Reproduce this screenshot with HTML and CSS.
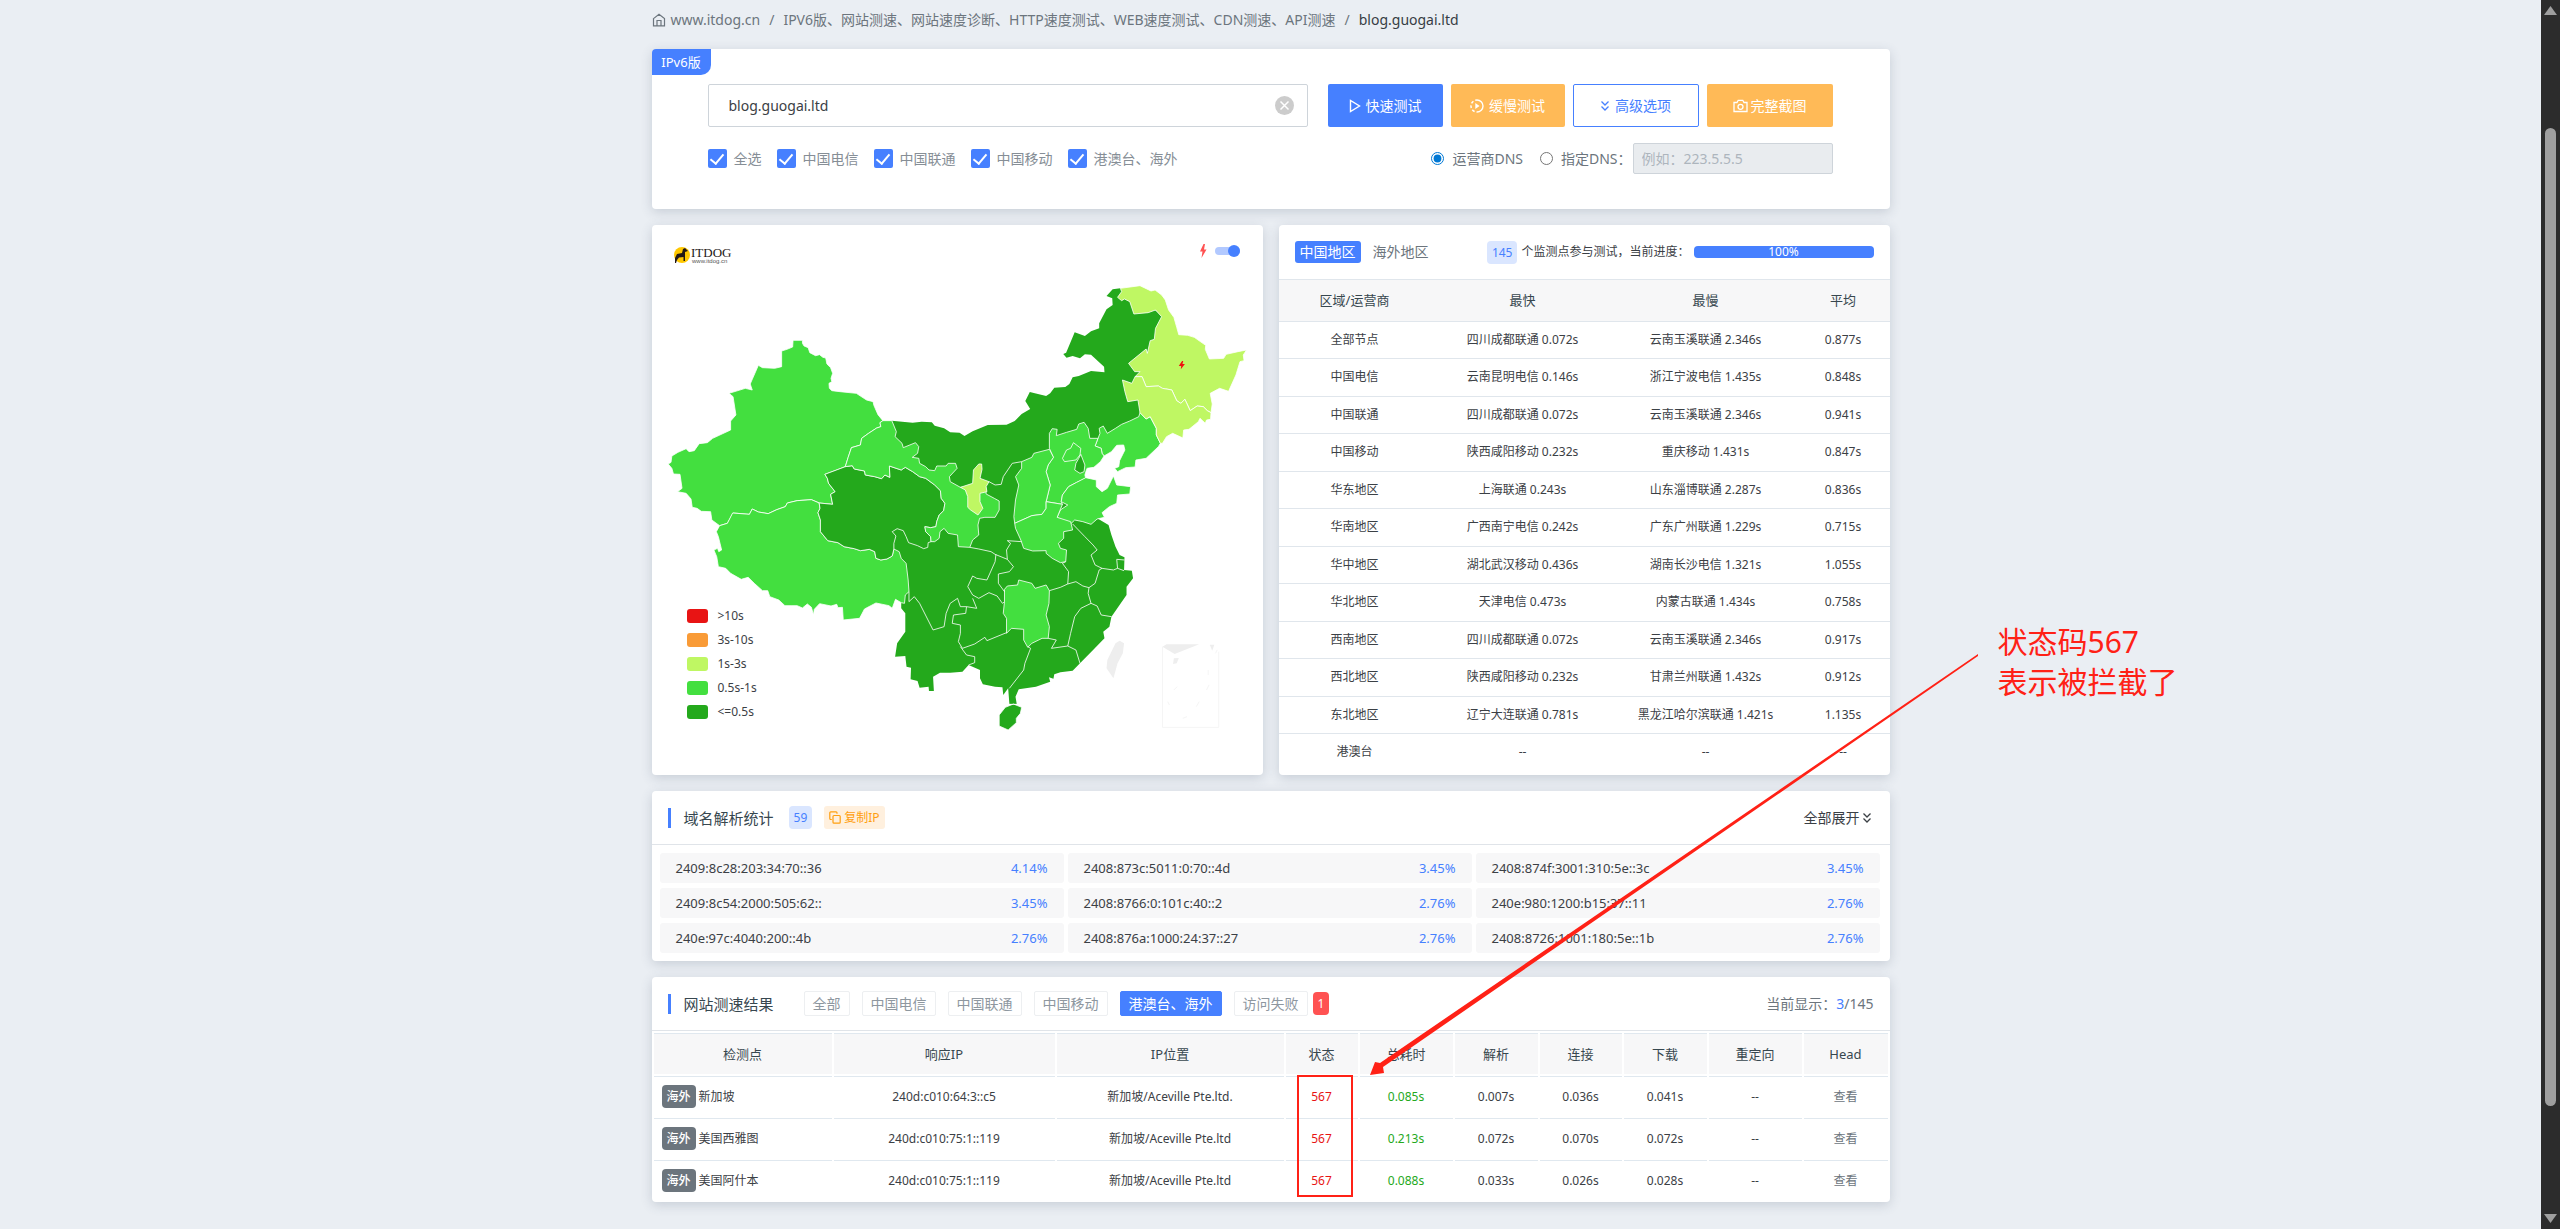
FILE: index.html
```html
<!DOCTYPE html>
<html lang="zh-CN">
<head>
<meta charset="utf-8">
<meta name="viewport" content="width=device-width, initial-scale=1">
<title>blog.guogai.ltd - 网站测速</title>
<link rel="stylesheet" href="styles.css">
</head>
<body>
<svg class="defs" aria-hidden="true">
  <symbol id="i-down2" viewBox="0 0 10 12"><path d="M1.5 1.5 5 5l3.5-3.5M1.5 6.5 5 10l3.5-3.5" fill="none" stroke="currentColor" stroke-width="1.3"/></symbol>
</svg>
<main class="page">
  <nav class="crumbs" aria-label="breadcrumb">
    <a href="#"><svg width="14" height="14" viewBox="0 0 14 14" fill="none" stroke="currentColor" stroke-width="1.2"><path d="M1.500 5.600 7 1.200l5.500 4.400V12.800H1.500zM5 12.800V7.500h4v5.300"/></svg>www.itdog.cn</a>
    <span>/</span>
    <a href="#">IPV6版、网站测速、网站速度诊断、HTTP速度测试、WEB速度测试、CDN测速、API测速</a>
    <span>/</span>
    <span class="current">blog.guogai.ltd</span>
  </nav>

  <section class="card search">
    <span class="version">IPv6版</span>
    <form class="search-form">
      <div class="row">
        <div class="host">
          <input type="text" aria-label="网址" value="blog.guogai.ltd">
          <button type="button" class="clear" aria-label="清除"><svg width="19" height="19" viewBox="0 0 19 19"><circle cx="9.500" cy="9.500" r="9.500" fill="#ccc"/><path d="m5.500 5.500 8 8m0-8-8 8" stroke="#fff" stroke-width="1.500"/></svg></button>
        </div>
        <div class="actions">
          <button type="button" class="btn blue"><svg width="12" height="14" viewBox="0 0 12 14"><path d="M1.500 1.500v11L10.500 7z" fill="none" stroke="currentColor" stroke-width="1.400"/></svg>快速测试</button>
          <button type="button" class="btn orange narrow"><svg width="14" height="14" viewBox="0 0 14 14"><circle cx="7" cy="7" r="6" fill="none" stroke="currentColor" stroke-width="1.400" stroke-dasharray="18.850 2 2.700 2 2.700 2 2.700 2 2.750" transform="rotate(-90 7 7)"/><path d="M5.300 4v6l4.200-3z" fill="currentColor"/></svg>缓慢测试</button>
          <button type="button" class="btn outline"><svg width="10" height="12"><use href="#i-down2"/></svg>高级选项</button>
          <button type="button" class="btn orange wide"><svg width="15" height="14" viewBox="0 0 15 14" fill="none" stroke="currentColor" stroke-width="1.300"><path d="M1 3.500h3l1.200-2.200h4.600L11 3.500h3v9H1z"/><circle cx="7.500" cy="7.800" r="2.500"/></svg>完整截图</button>
        </div>
      </div>
      <div class="row options">
        <div class="checks">
          <label><input type="checkbox" checked>全选</label>
          <label><input type="checkbox" checked>中国电信</label>
          <label><input type="checkbox" checked>中国联通</label>
          <label><input type="checkbox" checked>中国移动</label>
          <label><input type="checkbox" checked>港澳台、海外</label>
        </div>
        <div class="dns">
          <label><input type="radio" name="dns" checked>运营商DNS</label>
          <label><input type="radio" name="dns">指定DNS：</label>
          <input type="text" class="dns-ip" aria-label="DNS" placeholder="例如：223.5.5.5" disabled>
        </div>
      </div>
    </form>
  </section>

  <div class="pair">
    <section class="card map">
      <svg class="china" viewBox="0 0 611 550" role="img" aria-label="中国地图">
        <g class="regions" transform="translate(-12 -5) scale(.40816 .33333)">
          <path class="fast base" d="M617 602 668 608 690 605 715 607 722 617 745 625 760 637 783 638 795 648 815 634 852 615 898 614 918 603 935 582 956 567 944 543 955 516 995 528 1005 520 1015 503 1042 501 1052 492 1060 472 1075 468 1105 453 1138 457 1137 440 1105 404 1090 403 1078 415 1060 408 1045 413 1037 402 1044 398 1065 337 1090 348 1105 334 1125 325 1125 310 1143 268 1158 255 1157 235 1143 228 1158 208 1177 205 1300 300 1300 520 1225 600 1125 700 1080 770 1050 900 1120 895 1148 915 1155 945 1165 980 1175 1005 1187 1012 1186 1050 1205 1052 1208 1075 1192 1100 1192 1125 1172 1160 1155 1190 1150 1220 1135 1235 1138 1255 1110 1290 1078 1330 1060 1352 1030 1357 1015 1363 1013 1376 1002 1372 1005 1385 970 1400 928 1408 920 1430 923 1452 905 1452 902 1405 890 1425 888 1402 870 1400 840 1393 833 1375 833 1350 805 1335 790 1355 760 1358 735 1358 718 1370 720 1413 708 1413 707 1400 685 1403 680 1383 663 1378 664 1343 653 1340 650 1308 625 1310 630 1270 650 1235 650 1180 640 1165 640 1130 622 987 618 935 630 900z"/>
          <path class="fast" d="M895 1462 915 1452 935 1462 932 1480 922 1495 922 1508 902 1530 880 1518 880 1485z"/>
          <path class="mid" d="M375 361H398V370L402 378 412 383 416 398 430 407 440 404 448 412 455 414 458 432 467 443 472 460 468 475 470 485 463 490 464 505 470 512 490 515 530 520 555 540 571 545 573 556 583 584 595 602 588 608 590 620 580 624 560 640 543 655 540 675 518 683 510 712 503 740 480 751 453 763 459 775 462 790 478 815 467 823 472 853 439 849 420 839 385 842 361 849 356 860 335 869 314 881 290 876 275 867 268 883 228 879 214 910 195 917 176 900 173 875 150 874 140 865 128 862 125 837 113 820 92 815 103 805 98 763 82 762 78 745 69 732 76 727 78 708 93 697 113 686 120 695 133 692 145 671 165 668 178 655 222 630V603L235 585 228 530 218 520 258 505 275 510 270 492 290 436 300 443 330 445 347 440V393L360 388 374 381z"/>
          <path class="mid" d="M195 917 214 910 227 879 268 883 275 867 290 876 314 881 335 869 356 860 361 849 385 842 420 839 439 849 441 865 436 878 442 900V935L460 962 485 968 500 980 525 986 540 992 562 988 575 995 578 1015 590 1020 605 1017 618 1008 622 987 635 995 640 1015 652 1030 657 1080 659 1115 650 1125 648 1150 640 1148 626 1138 618 1165 610 1157 578 1149 550 1167 538 1195 498 1200 496 1162 485 1163 482 1153 468 1158 440 1151 427 1168 425 1185 420 1162 410 1152 398 1164 385 1157 370 1157 355 1157 340 1140 318 1130 313 1112H300L280 1090 265 1072 248 1078 222 1060 210 1045 192 1040 188 1010 181 990 190 985 193 995 200 990 192 950 187 935z"/>
          <path class="fast" d="M503 740 520 737 525 747 550 753 552 765 575 770 592 776 600 765 612 772 611 738 640 750 650 742 668 755 685 770 700 775 722 795 736 812 738 835 747 850 744 872 733 885 727 905 725 920 712 923 698 920 700 935 712 950 713 965 706 968 705 982 695 986 680 977 658 968 652 950 645 932 630 926 618 935 627 948 622 970 622 987 618 1008 605 1017 590 1020 578 1015 575 995 562 988 540 992 525 986 500 980 485 968 460 962 442 935V900L436 878 441 865 439 849 472 853 467 823 478 815 462 790 459 775 453 763z"/>
          <path class="mid" d="M617 602 595 602 588 608 590 620 580 624 560 640 543 655 540 675 518 683 510 712 503 740 520 737 525 747 550 753 552 765 575 770 592 776 600 765 612 772 611 738 640 750 650 742 668 755 685 770 700 775 722 795 736 812 738 835 747 850 744 872 733 885 727 905 725 920 712 923 698 920 700 935 712 950 713 965 722 965 733 955 735 935 745 925 755 940 778 945 780 980 808 982 815 960 830 945 828 915 832 895 845 892 870 892 880 870V843L868 835 848 822 847 800 785 802 760 785 758 770 777 745 773 730 755 730 750 738 727 738 722 752 708 750 700 740 685 730 683 715 667 712 680 700 683 680 675 668 645 683 642 670 625 650 628 635z"/>
          <path class="slow" d="M785 802 815 790 817 750 830 732H837L838 748 833 775 855 785 848 800 850 815 833 820V845L840 865 828 885 810 870 803 862V830L797 810z"/>
          <path class="mid" d="M1225 578 1240 597 1250 590 1265 625V645L1275 670 1270 680 1240 715 1215 720 1213 741 1190 743 1170 755 1163 745 1173 740 1175 722 1188 690 1185 675 1168 676 1155 695 1137 708 1132 700 1130 685 1115 678 1127 640 1125 625 1135 618 1145 640 1165 625 1180 613 1200 603 1222 590z"/>
          <path class="mid" d="M1003 640 1010 626 1022 628 1020 647 1045 637 1070 628 1075 612 1088 607 1098 625 1102 655H1122L1115 678 1130 685 1132 700 1137 708 1128 725 1112 742 1095 745 1090 765 1092 775 1070 787 1050 800 1035 825 1032 845 1035 853 995 845 1005 795 995 755 1000 735 1013 712 1003 685z"/>
          <path class="mid" d="M1003 688 1013 712 1000 735 995 755 1005 795 995 845V865L985 883 960 887 918 910 916 890 920 840 928 795 920 770 935 745V725L960 712 965 700z"/>
          <path class="mid" d="M1092 773 1118 780V800L1132 815 1145 805 1160 768 1168 795 1202 800 1200 822 1170 825 1168 850 1150 860 1132 878 1138 892 1120 897 1105 913 1085 905 1065 900 1055 912 1022 892 1030 870 1048 855 1032 845 1035 825 1050 800 1070 787z"/>
          <path class="mid" d="M995 845 1035 853 1022 892 1055 905 1060 930 1038 935V955L1025 970 1030 985 1045 990 1043 1025 1030 1028 1010 1015 995 1000V992L962 993 940 985 933 960 920 925 918 910 960 887 985 883 995 865z"/>
          <path class="mid" d="M893 1108 900 1098 925 1095 928 1080 960 1090 968 1105 995 1095 1003 1112 1002 1150 995 1185 1003 1220 1000 1255 985 1255 960 1270 950 1282 940 1260V1228L910 1225 898 1240V1195L890 1180 893 1145z"/>
          <path class="slow" d="M1177 205 1225 197 1252 213 1262 210 1278 225 1287 240 1295 270 1308 292 1315 322 1320 344 1342 346 1358 352 1386 376 1385 388 1395 417 1430 415 1436 403 1465 395 1486 390 1478 405 1480 422 1470 425 1460 465 1442 514 1420 505 1397 520 1402 552 1399 578 1390 572 1380 560 1365 558 1348 572 1335 538 1325 550 1315 542 1303 510 1280 505 1270 498 1240 500 1230 470H1213L1225 455H1212L1197 430 1240 387 1243 400 1250 362 1260 358 1263 325 1278 290 1263 270 1245 278 1210 282 1200 245 1187 237 1180 242 1170 232 1180 215z"/>
          <path class="slow" d="M1182 480 1205 490 1213 470H1230L1240 500 1270 498 1280 505 1303 510 1315 542 1325 550 1335 538 1348 572 1365 558 1380 560 1390 572 1399 578 1398 598 1388 600 1385 610 1372 595 1368 605 1345 628 1332 630 1330 654 1305 640 1290 650 1280 670H1275L1265 645V625L1250 590 1240 597 1225 578 1220 540 1195 545 1188 515z"/>
          <path class="fast" d="M1075 715 1080 703 1090 735 1088 755 1078 760 1065 750 1068 730z"/>
          <path class="line" d="M1035 715 1045 690 1055 685 1062 668 1080 685 1078 705 1068 720 1040 725zM855 785 870 795 885 793 890 770 912 730 935 725"/>
          <path class="line" transform="translate(0 840)" d="M808 142 830 147 860 155 870 163 900 178 898 150 908 130 900 122 935 125M872 163 870 185 850 240 825 235 815 228 803 260 815 285 830 295 855 278 875 288 888 310 893 305M900 178 915 200 905 215 878 222V250L893 275M659 275V305L672 290 685 310 718 390 745 380 750 340 760 310 778 295 785 320 800 320 798 340 768 345 765 370 785 375 785 400 780 425 790 445 820 432 845 412 850 422 898 398M800 320 825 325 815 295M785 440 800 465 820 470V488L805 495M950 440 957 445 943 490 940 510 905 565M1000 415 1020 420 1008 445 1048 438 1068 450 1078 490M1048 438 1055 400 1065 350 1080 325 1105 310 1120 318 1130 345 1155 350M1003 272 1030 262 1048 252 1068 245 1085 258 1100 263 1098 280 1105 310M1043 185 1035 190 1050 215 1048 252M1100 263 1115 250 1125 210 1132 205 1160 210 1170 205 1186 212M1060 72 1090 110 1110 135 1120 150 1105 165 1115 195 1132 205M1170 205 1168 178 1187 180M903 613H925"/>
          <path class="none" transform="translate(0 840)" d="M1175 422 1186 430 1183 460 1170 490 1160 535 1143 505 1145 480 1165 430zM1280 440 1290 433H1370L1310 462zM1308 475 1320 474 1315 490 1306 492zM1396 434H1407L1402 452z"/>
          <path class="frame" transform="translate(0 840)" d="M1280 440V682H1418V455M1392 510V525M1394 555 1388 570M1370 605 1363 620M1308 570 1316 560M1293 605 1297 615M1330 655 1340 650M1410 460 1414 450"/>
          <path class="bolt" d="M1328 423 1320 438H1326L1325 448 1335 432H1329L1331 423z"/>
        </g>
        <g class="logo">
          <ellipse cx="30" cy="30" rx="8" ry="8" fill="#ffc800"/>
          <path d="M23 38V33L25 29 30 28 31 24 33 23 36 26 33 27 33 31 33 36H31.500V32L27 32.500 25 35 24 38z" fill="#231815"/>
          <text x="39" y="32" class="logo-name">ITDOG</text>
          <text x="40" y="38" class="logo-url">www.itdog.cn</text>
        </g>
      </svg>
      <label class="toggle">
        <svg width="8" height="14" viewBox="0 0 8 14"><path d="M4.500 0 1 7.500h2.500L2.500 14 7.500 5.500H5L6 0z" fill="#ff5252"/></svg>
        <input type="checkbox" checked aria-label="闪电">
      </label>
      <ul class="legend">
        <li><i class="c1"></i>&gt;10s</li>
        <li><i class="c2"></i>3s-10s</li>
        <li><i class="c3"></i>1s-3s</li>
        <li><i class="c4"></i>0.5s-1s</li>
        <li><i class="c5"></i>&lt;=0.5s</li>
      </ul>
    </section>

    <section class="card stats">
      <header class="stats-head">
        <button type="button" class="tab on">中国地区</button>
        <button type="button" class="tab">海外地区</button>
        <div class="state"><span class="badge">145</span><span>个监测点参与测试，当前进度：</span></div>
        <div class="progress" role="progressbar" aria-valuenow="100" aria-valuemin="0" aria-valuemax="100">100%</div>
      </header>
      <table class="area">
        <colgroup><col class="a1"><col class="a2"><col class="a3"><col class="a4"></colgroup>
        <thead><tr><th>区域/运营商</th><th>最快</th><th>最慢</th><th>平均</th></tr></thead>
        <tbody>
          <tr><td>全部节点</td><td>四川成都联通 0.072s</td><td>云南玉溪联通 2.346s</td><td>0.877s</td></tr>
          <tr><td>中国电信</td><td>云南昆明电信 0.146s</td><td>浙江宁波电信 1.435s</td><td>0.848s</td></tr>
          <tr><td>中国联通</td><td>四川成都联通 0.072s</td><td>云南玉溪联通 2.346s</td><td>0.941s</td></tr>
          <tr><td>中国移动</td><td>陕西咸阳移动 0.232s</td><td>重庆移动 1.431s</td><td>0.847s</td></tr>
          <tr><td>华东地区</td><td>上海联通 0.243s</td><td>山东淄博联通 2.287s</td><td>0.836s</td></tr>
          <tr><td>华南地区</td><td>广西南宁电信 0.242s</td><td>广东广州联通 1.229s</td><td>0.715s</td></tr>
          <tr><td>华中地区</td><td>湖北武汉移动 0.436s</td><td>湖南长沙电信 1.321s</td><td>1.055s</td></tr>
          <tr><td>华北地区</td><td>天津电信 0.473s</td><td>内蒙古联通 1.434s</td><td>0.758s</td></tr>
          <tr><td>西南地区</td><td>四川成都联通 0.072s</td><td>云南玉溪联通 2.346s</td><td>0.917s</td></tr>
          <tr><td>西北地区</td><td>陕西咸阳移动 0.232s</td><td>甘肃兰州联通 1.432s</td><td>0.912s</td></tr>
          <tr><td>东北地区</td><td>辽宁大连联通 0.781s</td><td>黑龙江哈尔滨联通 1.421s</td><td>1.135s</td></tr>
          <tr><td>港澳台</td><td>--</td><td>--</td><td>--</td></tr>
        </tbody>
      </table>
    </section>
  </div>

  <section class="card">
    <header class="card-head">
      <h2>域名解析统计</h2>
      <span class="badge">59</span>
      <button type="button" class="copy"><svg width="12" height="13" viewBox="0 0 12 13" fill="none" stroke="currentColor" stroke-width="1.200"><rect x="4" y="4.500" width="7.200" height="7.700" rx="1"/><path d="M2.800 8.500H1.800a1 1 0 0 1-1-1V1.800a1 1 0 0 1 1-1H7a1 1 0 0 1 1 1v1"/></svg>复制IP</button>
      <a href="#" class="expand">全部展开<svg width="10" height="12"><use href="#i-down2"/></svg></a>
    </header>
    <ul class="ips">
      <li>2409:8c28:203:34:70::36<b>4.14%</b></li>
      <li>2408:873c:5011:0:70::4d<b>3.45%</b></li>
      <li>2408:874f:3001:310:5e::3c<b>3.45%</b></li>
      <li>2409:8c54:2000:505:62::<b>3.45%</b></li>
      <li>2408:8766:0:101c:40::2<b>2.76%</b></li>
      <li>240e:980:1200:b15:37::11<b>2.76%</b></li>
      <li>240e:97c:4040:200::4b<b>2.76%</b></li>
      <li>2408:876a:1000:24:37::27<b>2.76%</b></li>
      <li>2408:8726:1001:180:5e::1b<b>2.76%</b></li>
    </ul>
  </section>

  <section class="card">
    <header class="card-head results-head">
      <h2>网站测速结果</h2>
      <div class="filters">
        <button type="button">全部</button>
        <button type="button">中国电信</button>
        <button type="button">中国联通</button>
        <button type="button">中国移动</button>
        <button type="button" class="on">港澳台、海外</button>
        <button type="button">访问失败</button>
      </div>
      <span class="badge red">1</span>
      <span class="shown">当前显示：<em>3</em>/145</span>
    </header>
    <table class="results">
      <colgroup><col class="r1"><col class="r2"><col class="r3"><col class="r4"><col class="r5"><col class="r6"><col class="r7"><col class="r8"><col class="r9"><col class="r10"></colgroup>
      <thead><tr><th>检测点</th><th>响应IP</th><th>IP位置</th><th>状态</th><th>总耗时</th><th>解析</th><th>连接</th><th>下载</th><th>重定向</th><th>Head</th></tr></thead>
      <tbody>
        <tr><td class="node"><span class="badge grey">海外</span>新加坡</td><td>240d:c010:64:3::c5</td><td>新加坡/Aceville Pte.ltd.</td><td class="bad">567</td><td class="good">0.085s</td><td>0.007s</td><td>0.036s</td><td>0.041s</td><td>--</td><td><a href="#">查看</a></td></tr>
        <tr><td class="node"><span class="badge grey">海外</span>美国西雅图</td><td>240d:c010:75:1::119</td><td>新加坡/Aceville Pte.ltd</td><td class="bad">567</td><td class="good">0.213s</td><td>0.072s</td><td>0.070s</td><td>0.072s</td><td>--</td><td><a href="#">查看</a></td></tr>
        <tr><td class="node"><span class="badge grey">海外</span>美国阿什本</td><td>240d:c010:75:1::119</td><td>新加坡/Aceville Pte.ltd</td><td class="bad">567</td><td class="good">0.088s</td><td>0.033s</td><td>0.026s</td><td>0.028s</td><td>--</td><td><a href="#">查看</a></td></tr>
      </tbody>
    </table>
  </section>

  <svg class="markup" width="1340" height="1210" aria-hidden="true">
    <path d="M1326 654 728 1063 723 1062 718 1075 732 1073 731 1067 1326 656z" fill="#ff2116"/>
    <rect x="646" y="1076" width="54" height="120" fill="none" stroke="#ff2116" stroke-width="2"/>
  </svg>
  <p class="note">状态码567<br>表示被拦截了</p>
</main>
<div class="scrollbar" aria-hidden="true">
  <svg width="13" height="9" viewBox="0 0 13 9"><path d="M0 9 6.500 0 13 9z" fill="#9f9f9f"/></svg>
  <div class="track"><i></i></div>
  <svg width="13" height="9" viewBox="0 0 13 9"><path d="M0 0 6.500 9 13 0z" fill="#9f9f9f"/></svg>
</div>
</body>
</html>
```
FILE: styles.css
```css
* { box-sizing: border-box; }
body {
  margin: 0;
  padding-right: 19px;
  min-height: 100vh;
  overflow-x: hidden;
  background: #eaeef3;
  color: #3b4045;
  font: 14px/20px "Noto Sans", "Noto Sans CJK SC", sans-serif;
}
button, input { font: inherit; color: inherit; }
button { padding: 0; border: 0; background: none; cursor: pointer; }
a { color: inherit; text-decoration: none; }
h2, p, ul { margin: 0; padding: 0; }
ul { list-style: none; }
table { width: 100%; table-layout: fixed; font-size: 12px; text-align: center; }
th, td { padding: 0; }
th { font-size: 13px; font-weight: 400; color: #37474f; background: #f7f7f8; }
.defs { position: absolute; width: 0; height: 0; }

.page {
  position: relative;
  display: flex;
  flex-direction: column;
  gap: 16px;
  max-width: 1238px;
  margin: 0 auto;
  padding: 10px 0 27px;
}
.card {
  background: #fff;
  border-radius: 4px;
  box-shadow: 0 3px 12px rgba(60, 75, 100, .2);
}

.crumbs { display: flex; gap: 9px; margin-bottom: 3px; color: #6c757d; white-space: nowrap; }
.crumbs a { display: flex; align-items: center; gap: 5px; }
.crumbs .current { color: #373d44; }

/* search panel */
.search { position: relative; height: 160px; padding: 35px 57px 0 56px; }
.version {
  position: absolute;
  left: 0;
  top: 0;
  width: 59px;
  line-height: 26px;
  border-radius: 4px 0 10px 0;
  background: #4680ff;
  color: #fff;
  font-size: 13px;
  text-align: center;
}
.row { display: flex; align-items: center; justify-content: space-between; gap: 20px; }
.host { position: relative; flex: 1; }
.host input {
  display: block;
  width: 100%;
  height: 43px;
  padding: 0 40px 0 20px;
  border: 1px solid #ced4da;
  border-radius: 2px;
  background: #fff;
}
.clear { position: absolute; right: 14px; top: 12px; height: 19px; }
.clear svg { display: block; }
.actions { display: flex; gap: 8px; }
.btn {
  display: flex;
  align-items: center;
  justify-content: center;
  gap: 5px;
  width: 115px;
  height: 43px;
  border-radius: 2px;
  color: #fff;
}
.blue { background: #4680ff; }
.orange { background: #ffba57; }
.narrow { width: 114px; }
.outline { width: 126px; border: 1px solid #4680ff; color: #4680ff; }
.wide { width: 126px; gap: 3px; }
.options { margin-top: 16px; }
.checks { display: flex; gap: 15px; color: #868e96; }
.checks label, .dns label { display: flex; align-items: center; gap: 7px; }
.checks input {
  appearance: none;
  display: grid;
  place-items: center;
  width: 19px;
  height: 19px;
  margin: 0;
  border-radius: 2px;
  background: #4680ff;
}
.checks input::after {
  content: "";
  width: 6px;
  height: 11px;
  margin-bottom: 3px;
  border: solid #fff;
  border-width: 0 2px 2px 0;
  rotate: 40deg;
}
.dns { display: flex; align-items: center; color: #6c757d; }
.dns label { gap: 8px; margin-right: 1px; }
.dns label + label { margin-left: 16px; }
.dns input[type="radio"] { width: 13px; height: 13px; margin: 0; accent-color: #0078d4; }
.dns-ip {
  width: 200px;
  height: 31px;
  padding: 0 8px;
  border: 1px solid #ced4da;
  border-radius: 2px;
  background: #e9ecef;
}
.dns-ip::placeholder { color: #adb5bd; }

/* map and area table */
.pair { display: grid; grid-template-columns: 1fr 1fr; gap: 16px; }
.map { position: relative; }
.china { display: block; width: 100%; }
.regions path { stroke: #fff; stroke-opacity: .8; stroke-width: 1; vector-effect: non-scaling-stroke; stroke-linejoin: round; }
.regions .fast { fill: #24a91c; }
.regions .mid { fill: #43df3f; }
.regions .slow { fill: #bff763; }
.regions .base { stroke: none; }
.regions .none { fill: #eee; stroke: none; }
.regions .line { fill: none; }
.regions .frame { fill: none; stroke: #f5f5f5; stroke-opacity: 1; }
.regions .bolt { fill: #f01010; stroke: none; }
.logo-name { font: 13px "Liberation Serif", serif; fill: #231815; }
.logo-url { font: 6px "Liberation Sans", sans-serif; fill: #555; }
.toggle { position: absolute; right: 23px; top: 19px; display: flex; align-items: center; gap: 8px; }
.toggle input {
  appearance: none;
  display: flex;
  align-items: center;
  justify-content: flex-end;
  width: 25px;
  height: 8px;
  margin: 0;
  border-radius: 4px;
  background: #b2c9ff;
}
.toggle input::after { content: ""; width: 12px; height: 12px; border-radius: 50%; background: #4680ff; }
.legend { position: absolute; left: 35px; bottom: 51px; font-size: 12px; line-height: 24px; }
.legend li { display: flex; align-items: center; gap: 10px; }
.legend i { width: 21px; height: 14px; border-radius: 3px; }
.c1 { background: #e81414; }
.c2 { background: #f99b37; }
.c3 { background: #bff763; }
.c4 { background: #43df3f; }
.c5 { background: #24a91c; }

.stats-head { display: flex; align-items: center; height: 55px; padding: 0 16px; border-bottom: 1px solid #e0e6ec; }
.tab { padding: 0 5px; margin-right: 7px; line-height: 22px; border-radius: 3px; color: #6c757d; }
.tab.on { background: #4680ff; color: #fff; }
.state { display: flex; align-items: center; gap: 4px; margin-left: auto; font-size: 12px; }
.badge {
  padding: 0 5px;
  border-radius: 4px;
  background: #dae6ff;
  color: #4680ff;
  font-size: 12px;
  line-height: 23px;
}
.badge.red { background: #ff5252; color: #fff; margin-left: 5px; }
.badge.grey { display: inline-block; margin-right: 3px; background: #6c757d; color: #fff; font-weight: 500; }
.progress {
  width: 180px;
  margin-left: 4px;
  border-radius: 4px;
  background: #4680ff;
  color: #fff;
  font-size: 12px;
  line-height: 12px;
  text-align: center;
}
.area { border-collapse: collapse; margin-bottom: 4px; }
.area tr { height: 37px; border-bottom: 1px solid #e0e6ec; }
.area tbody tr:nth-child(even) { height: 38px; }
.area thead tr { height: 41px; }
.area tbody tr:last-child { border: 0; }
.a1 { width: 152px; }
.a2 { width: 184px; }
.a3 { width: 182px; }

/* resolved addresses */
.card-head { display: flex; align-items: center; height: 54px; padding: 0 18px 0 16px; border-bottom: 1px solid #e0e4e9; }
.card-head h2 {
  padding-left: 13px;
  margin-right: 15px;
  border-left: 3px solid #4680ff;
  color: #37474f;
  font-size: 15px;
  font-weight: 400;
  line-height: 20px;
}
.copy {
  display: flex;
  align-items: center;
  gap: 3px;
  margin-left: 12px;
  padding: 0 5px;
  border-radius: 3px;
  background: #fff0de;
  color: #ff9f0f;
  font-size: 12px;
  line-height: 23px;
}
.expand { display: flex; align-items: center; gap: 2px; margin-left: auto; }
.ips { display: grid; grid-template-columns: repeat(3, 1fr); gap: 5px 4px; padding: 8px 10px 8px 8px; }
.ips li {
  display: flex;
  justify-content: space-between;
  padding: 0 16px;
  border-radius: 3px;
  background: #f7f7f8;
  font-size: 13px;
  line-height: 30px;
}
.ips b { font-weight: 400; color: #4680ff; }

/* results */
.filters { display: flex; gap: 12px; margin-left: 15px; color: #8e979f; }
.filters button { padding: 0 8px; border: 1px solid #edeff1; border-radius: 2px; line-height: 23px; }
.filters .on { border-color: #4680ff; background: #4680ff; color: #fff; }
.shown { margin-left: auto; color: #6c757d; }
.shown em { color: #4680ff; font-style: normal; }
.results-head { padding-right: 16px; }
.results { border-spacing: 2px; }
.results th, .results td { border-top: 1px solid #e0e8ef; }
.results th { height: 41px; }
.results td { height: 40px; }
.results .node { padding-left: 8px; text-align: left; }
.results .bad { color: #e81414; }
.results .good { color: #24a91c; }
.results a { color: #6c757d; }
.r1 { width: 178px; }
.r2 { width: 221px; }
.r3 { width: 227px; }
.r4 { width: 72px; }
.r5 { width: 93px; }
.r6 { width: 83px; }
.r7 { width: 82px; }
.r8 { width: 83px; }
.r9 { width: 93px; }

/* red pen marks over the page */
.markup { position: absolute; left: 0; top: 0; pointer-events: none; }
.note { position: absolute; left: 1346px; top: 622px; color: #ff2116; font-size: 30px; line-height: 40px; white-space: nowrap; }

.scrollbar {
  position: fixed;
  inset: 0 0 0 auto;
  display: flex;
  flex-direction: column;
  align-items: center;
  width: 19px;
  padding: 6px 0;
  background: #2c2c2c;
}
.track { flex: 1; padding: 113px 0 108px; }
.track i { display: block; width: 11px; height: 100%; border-radius: 6px; background: #9f9f9f; }
```
